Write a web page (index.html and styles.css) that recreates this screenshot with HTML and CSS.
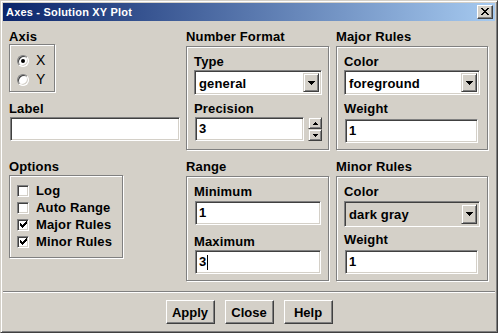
FILE: index.html
```html
<!DOCTYPE html>
<html>
<head>
<meta charset="utf-8">
<link rel="stylesheet" href="styles.css">
</head>
<body>
<div class="window">
  <div class="titlebar">
    <span class="title">Axes - Solution XY Plot</span>
    <span class="tclose"><svg width="8" height="7" viewBox="0 0 8 7" shape-rendering="crispEdges"><path d="M0 0h2v1H0zM6 0h2v1H6zM1 1h2v1H1zM5 1h2v1H5zM2 2h4v1H2zM3 3h2v1H3zM2 4h4v1H2zM1 5h2v1H1zM5 5h2v1H5zM0 6h2v1H0zM6 6h2v1H6z" fill="#000"/></svg></span>
  </div>
  <div class="main">
    <div class="col col1">
      <div class="lbl">Axis</div>
      <div class="group axis">
        <div class="opt"><span class="radio on"></span>X</div>
        <div class="opt"><span class="radio"></span>Y</div>
      </div>
      <div class="lbl mt9">Label</div>
      <div class="field w170 mt1"></div>
      <div class="lbl mt18">Options</div>
      <div class="group options">
        <div class="chk"><span class="box"></span>Log</div>
        <div class="chk"><span class="box"></span>Auto Range</div>
        <div class="chk"><span class="box"><svg width="7" height="7" viewBox="0 0 7 7" shape-rendering="crispEdges"><path d="M0 2h1v3H0zM1 3h1v3H1zM2 4h1v3H2zM3 3h1v3H3zM4 2h1v3H4zM5 1h1v3H5zM6 0h1v3H6z" fill="#000"/></svg></span>Major Rules</div>
        <div class="chk"><span class="box"><svg width="7" height="7" viewBox="0 0 7 7" shape-rendering="crispEdges"><path d="M0 2h1v3H0zM1 3h1v3H1zM2 4h1v3H2zM3 3h1v3H3zM4 2h1v3H4zM5 1h1v3H5zM6 0h1v3H6z" fill="#000"/></svg></span>Minor Rules</div>
      </div>
    </div>
    <div class="col col2">
      <div class="lbl">Number Format</div>
      <div class="group top">
        <div class="lbl">Type</div>
        <div class="combo w128 mt1"><span class="ctext">general</span><span class="cbtn"><svg width="7" height="4" viewBox="0 0 7 4" shape-rendering="crispEdges"><path d="M0 0h7v1H0zM1 1h5v1H1zM2 2h3v1H2zM3 3h1v1H3z" fill="#000"/></svg></span></div>
        <div class="lbl mt6">Precision</div>
        <div class="prow mt1">
          <div class="field w109">3</div>
          <div class="spin">
            <span class="sbtn"><svg width="5" height="3" viewBox="0 0 5 3" shape-rendering="crispEdges"><path d="M2 0h1v1H2zM1 1h3v1H1zM0 2h5v1H0z" fill="#000"/></svg></span>
            <span class="sbtn"><svg width="5" height="3" viewBox="0 0 5 3" shape-rendering="crispEdges"><path d="M0 0h5v1H0zM1 1h3v1H1zM2 2h1v1H2z" fill="#000"/></svg></span>
          </div>
        </div>
      </div>
      <div class="lbl mt9">Range</div>
      <div class="group bottom">
        <div class="lbl">Minimum</div>
        <div class="field w126 mt2">1</div>
        <div class="lbl mt9">Maximum</div>
        <div class="field w126 mt1">3<span class="caret"></span></div>
      </div>
    </div>
    <div class="col col3">
      <div class="lbl">Major Rules</div>
      <div class="group top">
        <div class="lbl">Color</div>
        <div class="combo w136 mt1"><span class="ctext">foreground</span><span class="cbtn"><svg width="7" height="4" viewBox="0 0 7 4" shape-rendering="crispEdges"><path d="M0 0h7v1H0zM1 1h5v1H1zM2 2h3v1H2zM3 3h1v1H3z" fill="#000"/></svg></span></div>
        <div class="lbl mt6">Weight</div>
        <div class="field w133 mt3">1</div>
      </div>
      <div class="lbl mt9">Minor Rules</div>
      <div class="group bottom">
        <div class="lbl">Color</div>
        <div class="combo w136 mt2 gray h26"><span class="ctext">dark gray</span><span class="cbtn"><svg width="7" height="4" viewBox="0 0 7 4" shape-rendering="crispEdges"><path d="M0 0h7v1H0zM1 1h5v1H1zM2 2h3v1H2zM3 3h1v1H3z" fill="#000"/></svg></span></div>
        <div class="lbl mt5">Weight</div>
        <div class="field w133 mt3">1</div>
      </div>
    </div>
  </div>
  <div class="sep"></div>
  <div class="buttons">
    <button class="btn">Apply</button>
    <button class="btn">Close</button>
    <button class="btn">Help</button>
  </div>
</div>
</body>
</html>
```
FILE: styles.css
```css
* { box-sizing: border-box; }
html, body { margin: 0; padding: 0; }
body {
  font-family: "Liberation Sans", Arial, sans-serif;
  font-weight: bold;
  font-size: 13px;
  letter-spacing: 0.15px;
  color: #000;
  background: #d4d0c8;
}
.window {
  width: 498px;
  height: 333px;
  background: #d4d0c8;
  border: 1px solid;
  border-color: #d4d0c8 #404040 #404040 #d4d0c8;
  box-shadow: inset 1px 1px 0 #fff, inset -1px -1px 0 #808080;
  padding: 2px;
  display: flex;
  flex-direction: column;
}
.titlebar {
  height: 18px;
  flex: none;
  background: linear-gradient(to right, #0a246a, #a6caf0);
  display: flex;
  align-items: center;
  justify-content: space-between;
  padding: 0 2px 0 3px;
}
.title {
  color: #fff;
  font-size: 11px;
  letter-spacing: 0.2px;
  line-height: 18px;
  white-space: nowrap;
}
.tclose {
  width: 16px;
  height: 14px;
  background: #d4d0c8;
  border: 1px solid;
  border-color: #fff #404040 #404040 #fff;
  box-shadow: inset -1px -1px 0 #808080;
  display: flex;
  align-items: center;
  justify-content: center;
  padding-bottom: 1px;
}
.main {
  height: 270px;
  flex: none;
  display: flex;
  gap: 7px;
  padding: 8px 0 0 6px;
}
.col { display: flex; flex-direction: column; align-items: flex-start; }
.col1 { width: 170px; }
.col2 { width: 143px; }
.col3 { width: 152px; }
.lbl { height: 15px; line-height: 15px; white-space: nowrap; }
.mt1 { margin-top: 1px; }
.mt2 { margin-top: 2px; }
.mt3 { margin-top: 3px; }
.mt5 { margin-top: 5px; }
.mt6 { margin-top: 6px; }
.mt9 { margin-top: 9px; }
.mt18 { margin-top: 18px; }
.group {
  border: 1px solid #808080;
  box-shadow: inset 1px 1px 0 #fff, 1px 1px 0 #fff;
  display: flex;
  flex-direction: column;
  align-items: flex-start;
}
.axis { width: 46px; height: 48px; padding: 6px 0 0 7px; }
.options { width: 114px; height: 83px; padding: 6px 0 0 7px; margin-top: 1px; }
.col2 .group, .col3 .group { width: 100%; padding: 7px 0 0 7px; margin-top: 2px; }
.group.top { height: 104px; }
.group.bottom { height: 105px; }
.opt {
  height: 19px;
  line-height: 19px;
  display: flex;
  align-items: center;
  font-weight: normal;
  font-size: 14px;
}
.radio {
  width: 12px;
  height: 12px;
  border-radius: 50%;
  background: #fff;
  border: 1px solid;
  border-color: #808080 #fff #fff #808080;
  box-shadow: inset 1px 1px 0 #404040, inset -1px -1px 0 #d4d0c8;
  margin-right: 7px;
  display: flex;
  align-items: center;
  justify-content: center;
}
.radio.on::after {
  content: "";
  width: 4px;
  height: 4px;
  border-radius: 50%;
  background: #000;
}
.chk { height: 17px; line-height: 17px; display: flex; align-items: center; white-space: nowrap; }
.box {
  width: 12px;
  height: 12px;
  background: #fff;
  border: 1px solid;
  border-color: #808080 #fff #fff #808080;
  box-shadow: inset 1px 1px 0 #404040, inset -1px -1px 0 #d4d0c8;
  margin-right: 7px;
  display: flex;
  align-items: center;
  justify-content: center;
}
.box svg { display: block; }
.field {
  height: 24px;
  line-height: 22px;
  background: #fff;
  border: 1px solid;
  border-color: #808080 #fff #fff #808080;
  box-shadow: inset 1px 1px 0 #404040, inset -1px -1px 0 #d4d0c8;
  padding-left: 3px;
  margin-left: 1px;
  display: flex;
  align-items: center;
}
.w170 { width: 170px; }
.w109 { width: 109px; }
.w126 { width: 126px; }
.w133 { width: 133px; }
.w128 { width: 128px; }
.w136 { width: 136px; }
.caret { width: 1px; height: 15px; background: #000; margin-left: 1px; }
.combo {
  height: 25px;
  background: #fff;
  border: 1px solid;
  border-color: #808080 #fff #fff #808080;
  box-shadow: inset 1px 1px 0 #404040, inset -1px -1px 0 #d4d0c8;
  padding: 2px;
  display: flex;
  align-items: stretch;
}
.combo.h26 { height: 26px; }
.combo.gray { background: #d4d0c8; }
.ctext { flex: 1; line-height: 21px; padding-left: 2px; white-space: nowrap; }
.cbtn {
  width: 16px;
  background: #d4d0c8;
  border: 1px solid;
  border-color: #d4d0c8 #404040 #404040 #d4d0c8;
  box-shadow: inset 1px 1px 0 #fff, inset -1px -1px 0 #808080;
  display: flex;
  align-items: center;
  justify-content: center;
}
.cbtn svg, .sbtn svg, .tclose svg { display: block; }
.prow { display: flex; align-items: stretch; }
.spin { width: 14px; height: 24px; margin-left: 4px; display: flex; flex-direction: column; }
.sbtn {
  height: 12px;
  background: #d4d0c8;
  border: 1px solid;
  border-color: #d4d0c8 #404040 #404040 #d4d0c8;
  box-shadow: inset 1px 1px 0 #fff, inset -1px -1px 0 #808080;
  display: flex;
  align-items: center;
  justify-content: center;
}
.sep {
  flex: none;
  height: 2px;
  border-top: 1px solid #808080;
  border-bottom: 1px solid #fff;
}
.buttons {
  flex: 1;
  display: flex;
  justify-content: center;
  align-items: flex-start;
  gap: 10px;
  padding-top: 7px;
}
.btn {
  width: 49px;
  height: 24px;
  padding: 0;
  font: inherit;
  letter-spacing: 0;
  color: #000;
  background: #d4d0c8;
  border: 1px solid;
  border-color: #fff #404040 #404040 #fff;
  box-shadow: inset -1px -1px 0 #808080;
  border-radius: 0;
}
```
